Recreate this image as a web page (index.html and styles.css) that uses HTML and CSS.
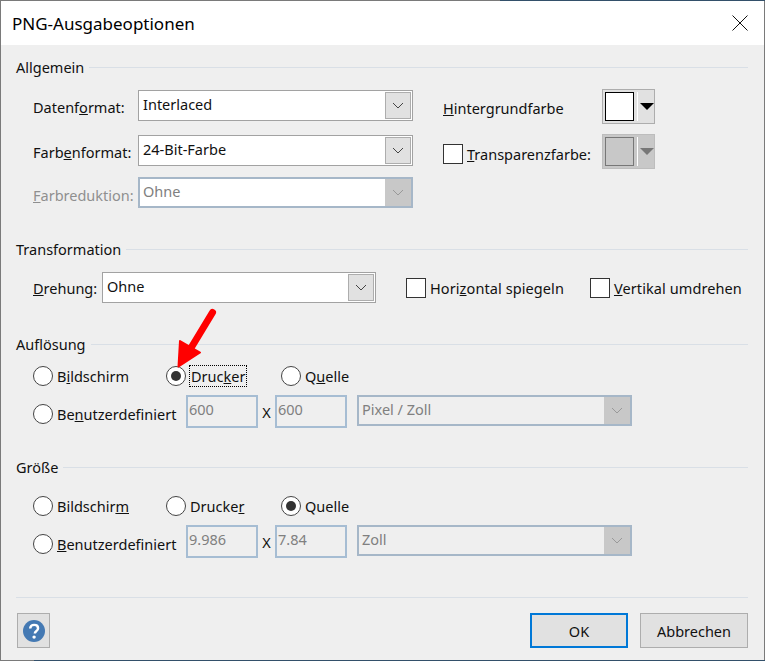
FILE: index.html
```html
<!DOCTYPE html>
<html lang="de">
<head>
<meta charset="utf-8">
<title>PNG-Ausgabeoptionen</title>
<link rel="stylesheet" href="styles.css">
</head>
<body>
<div class="dialog">
  <header class="titlebar">
    <span class="title">PNG-Ausgabeoptionen</span>
    <svg class="close" width="16" height="16" viewBox="0 0 16 16"><path d="M0.5 0.5L15.5 15.5M15.5 0.5L0.5 15.500" stroke="#111" stroke-width="1" fill="none"/></svg>
  </header>
  <main class="content">
    <section class="group group-general">
      <div class="legend"><span>Allgemein</span><i></i></div>
      <div class="general">
        <div class="format-grid">
          <label class="lbl">Datenf<u>o</u>rmat:</label>
          <div class="combo"><span>Interlaced</span><b class="drop"><svg width="12" height="7" viewBox="0 0 12 7"><path d="M1 1L6 6L11 1" fill="none" stroke="#444"/></svg></b></div>
          <label class="lbl">Farb<u>e</u>nformat:</label>
          <div class="combo"><span>24-Bit-Farbe</span><b class="drop"><svg width="12" height="7" viewBox="0 0 12 7"><path d="M1 1L6 6L11 1" fill="none" stroke="#444"/></svg></b></div>
          <label class="lbl off"><u>F</u>arbreduktion:</label>
          <div class="combo disabled white"><span>Ohne</span><b class="drop"><svg width="12" height="7" viewBox="0 0 12 7"><path d="M1 1L6 6L11 1" fill="none" stroke="#999"/></svg></b></div>
        </div>
        <div class="colors">
          <div class="color-row first">
            <label class="lbl color-label"><u>H</u>intergrundfarbe</label>
            <div class="colorbtn"><em class="swatch"></em><s class="sep"></s><svg width="14" height="7" viewBox="0 0 14 7"><path d="M0 0H14L7 7Z" fill="#000"/></svg></div>
          </div>
          <div class="color-row">
            <label class="check color-check"><em class="box"></em><span class="lbl"><u>T</u>ransparenzfarbe:</span></label>
            <div class="colorbtn off"><em class="swatch"></em><s class="sep"></s><svg width="14" height="7" viewBox="0 0 14 7"><path d="M0 0H14L7 7Z" fill="#777"/></svg></div>
          </div>
        </div>
      </div>
    </section>

    <section class="group group-trans">
      <div class="legend"><span>Transformation</span><i></i></div>
      <div class="trans">
        <label class="lbl"><u>D</u>rehung:</label>
        <div class="combo"><span>Ohne</span><b class="drop"><svg width="12" height="7" viewBox="0 0 12 7"><path d="M1 1L6 6L11 1" fill="none" stroke="#444"/></svg></b></div>
        <label class="check flip-h"><em class="box"></em><span class="lbl">Hori<u>z</u>ontal spiegeln</span></label>
        <label class="check flip-v"><em class="box"></em><span class="lbl"><u>V</u>ertikal umdrehen</span></label>
      </div>
    </section>

    <section class="group group-res">
      <div class="legend"><span>Auflösung</span><i></i></div>
      <div class="radios r1">
        <label class="radio w1"><em class="dot"></em><span class="lbl">B<u>i</u>ldschirm</span></label>
        <label class="radio w2"><em class="dot on"></em><span class="lbl focus">Druc<u>k</u>er</span></label>
        <label class="radio"><em class="dot"></em><span class="lbl">Q<u>u</u>elle</span></label>
      </div>
      <div class="custom">
        <label class="radio cw"><em class="dot"></em><span class="lbl">Be<u>n</u>utzerdefiniert</span></label>
        <div class="num">600</div><span class="lbl x">X</span><div class="num">600</div>
        <div class="combo disabled unit"><span>Pixel / Zoll</span><b class="drop"><svg width="12" height="7" viewBox="0 0 12 7"><path d="M1 1L6 6L11 1" fill="none" stroke="#999"/></svg></b></div>
      </div>
    </section>

    <section class="group group-size">
      <div class="legend"><span>Größe</span><i></i></div>
      <div class="radios r2">
        <label class="radio w1"><em class="dot"></em><span class="lbl">Bildschir<u>m</u></span></label>
        <label class="radio w2b"><em class="dot"></em><span class="lbl">Drucke<u>r</u></span></label>
        <label class="radio"><em class="dot on"></em><span class="lbl">Quelle</span></label>
      </div>
      <div class="custom">
        <label class="radio cw"><em class="dot"></em><span class="lbl"><u>B</u>enutzerdefiniert</span></label>
        <div class="num">9.986</div><span class="lbl x">X</span><div class="num">7.84</div>
        <div class="combo disabled unit"><span>Zoll</span><b class="drop"><svg width="12" height="7" viewBox="0 0 12 7"><path d="M1 1L6 6L11 1" fill="none" stroke="#999"/></svg></b></div>
      </div>
    </section>

    <footer class="footer">
      <div class="help"><svg width="22" height="22" viewBox="0 0 27 27"><circle cx="13.5" cy="13.5" r="13.5" fill="#4479b3"/><path d="M8.800 10.400c.2-2.800 2.200-4.400 4.900-4.400 2.800 0 4.800 1.600 4.800 4 0 1.800-1 2.800-2.300 3.700-1.200.9-1.700 1.500-1.700 3" fill="none" stroke="#fff" stroke-width="3"/><circle cx="13.600" cy="21" r="2.100" fill="#fff"/></svg></div>
      <div class="actions">
        <button class="btn ok" type="button">OK</button>
        <button class="btn cancel" type="button">Abbrechen</button>
      </div>
    </footer>
  </main>
  <svg class="arrow" width="50" height="70" viewBox="0 0 50 70"><path d="M40.500 6.500L19 42" stroke="#f00" stroke-width="7" stroke-linecap="round" fill="none"/><path d="M6.500 60.500L8 35L28 46.500Z" fill="#f00" stroke="#f00" stroke-width="2" stroke-linejoin="round"/></svg>
</div>
</body>
</html>
```
FILE: styles.css
```css
* { box-sizing: border-box; }
html, body { margin: 0; padding: 0; }
body {
  width: 765px;
  height: 661px;
  overflow: hidden;
  padding: 1px;
  font-family: "Noto Sans", "Open Sans", sans-serif;
  font-size: 14.5px;
  color: #111;
  background:
    linear-gradient(to right, #7a7a7a 0 500px, #33506a 500px) top / 100% 1px no-repeat,
    linear-gradient(to right, #7a7a7a 0 34px, #33506a 34px) bottom / 100% 1px no-repeat,
    #7a7a7a;
}
.dialog {
  position: relative;
  width: 763px;
  height: 659px;
  display: flex;
  flex-direction: column;
  background: #efefef;
}
.titlebar {
  height: 44px;
  flex: none;
  background: #fff;
  display: flex;
  align-items: center;
  justify-content: space-between;
  padding: 0 16px 0 11px;
}
.title { font-size: 17px; color: #000; }
.content {
  flex: 1;
  display: flex;
  flex-direction: column;
  padding: 12px 16px 0 15px;
}
.legend {
  height: 20px;
  display: flex;
  align-items: center;
  gap: 5px;
}
.legend i { flex: 1; height: 1px; background: #d9dfe6; }
.group-general { height: 182px; flex: none; }
.group-res { margin-top: 31px; }
.group-size { margin-top: 29px; }

.general {
  display: flex;
  margin-top: 13px;
  padding-left: 17px;
}
.format-grid {
  display: grid;
  grid-template-columns: 105px 275px;
  grid-template-rows: 31px 45px 42px;
  align-items: end;
  width: 410px;
}
.format-grid .lbl { line-height: 20px; padding-bottom: 4px; }
.format-grid .lbl.off { padding-bottom: 3px; }
.lbl { white-space: nowrap; }
.off { color: #8f8f8f; }
.combo {
  height: 31px;
  background: #fff;
  border: 1px solid #a2a2a2;
  display: flex;
  align-items: stretch;
  justify-content: space-between;
  padding: 1px;
}
.combo > span { padding: 0 3px; line-height: 24px; }
.drop {
  width: 26px;
  background: #e1e1e1;
  border: 1px solid #adadad;
  display: flex;
  align-items: center;
  justify-content: center;
}
.combo.disabled {
  border: 2px solid #a6b7c8;
  background: #efefef;
  padding: 0;
  color: #808080;
}
.combo.disabled.white { background: #fff; }
.combo.disabled .drop { background: #c8c8c8; border: 0; }
.colors { width: 212px; margin-top: -1px; }
.color-row { display: flex; align-items: center; justify-content: space-between; height: 35px; }
.color-row.first { margin-bottom: 10px; }
.color-label { padding-top: 2px; }
.colorbtn {
  width: 53px;
  height: 35px;
  background: #e1e1e1;
  border: 1px solid #adadad;
  display: flex;
  align-items: center;
  padding-left: 2px;
}
.colorbtn svg { margin-left: 2px; margin-top: -1px; }
.swatch { display: block; width: 29px; height: 29px; background: #fff; border: 1px solid #000; }
.sep { display: block; width: 1px; height: 29px; background: #fff; margin-left: 3px; }
.colorbtn.off { background: #c8c8c8; border-color: #bdbdbd; }
.colorbtn.off .swatch { background: #c8c8c8; border-color: #777; }
.check { display: flex; align-items: center; gap: 4px; }
.box { display: block; width: 20px; height: 20px; background: #fff; border: 1px solid #333; }
.color-check { padding-top: 5px; }

.trans {
  display: flex;
  align-items: center;
  margin-top: 13px;
  padding-left: 17px;
}
.trans > .lbl { width: 69px; }
.trans > .combo { width: 274px; }
.trans .check .lbl { letter-spacing: 0.09px; }
.flip-h { margin-left: 30px; }
.flip-v { margin-left: 26px; }

.radios {
  display: flex;
  align-items: center;
  height: 22px;
  margin-top: 11px;
  padding-left: 17px;
}
.r2 { margin-top: 18px; }
.radio { display: flex; align-items: center; gap: 4px; }
.w1 { width: 133px; }
.w2 { width: 115px; }
.w2b { width: 115px; }
.dot {
  display: block;
  width: 20px;
  height: 20px;
  border-radius: 50%;
  background: #fff;
  border: 1.5px solid #444;
  position: relative;
  flex: none;
}
.dot.on::after {
  content: "";
  position: absolute;
  left: 3.5px;
  top: 3.5px;
  width: 10px;
  height: 10px;
  border-radius: 50%;
  background: #333;
}
.focus { outline: 1px dotted #000; outline-offset: 0; padding: 0 1px; }
.custom {
  display: flex;
  align-items: flex-start;
  height: 33px;
  margin-top: 8px;
  padding-left: 17px;
}
.custom .radio { width: 153px; margin-top: 9px; }
.num {
  width: 72px;
  height: 33px;
  border: 2px solid #a6bdd3;
  background: #efefef;
  color: #808080;
  padding: 0 1px;
  line-height: 24px;
}
.x { width: 17px; text-align: center; margin-top: 7px; }
.unit { width: 275px; margin-left: 10px; }

.footer {
  margin-top: auto;
  height: 63px;
  border-top: 1px solid #d9dfe6;
  display: flex;
  justify-content: space-between;
  align-items: flex-start;
  padding-top: 15px;
}
.help {
  margin-left: 1px;
  width: 33px;
  height: 35px;
  background: #e1e1e1;
  border: 1px solid #adadad;
  display: flex;
  align-items: center;
  justify-content: center;
}
.actions { display: flex; gap: 12px; }
.btn {
  height: 35px;
  background: #e1e1e1;
  border: 1px solid #adadad;
  font: inherit;
  color: #111;
  padding: 0;
}
.ok { width: 98px; border: 2px solid #0078d7; }
.cancel { width: 108px; }
.arrow { position: absolute; left: 171px; top: 305px; }
```
